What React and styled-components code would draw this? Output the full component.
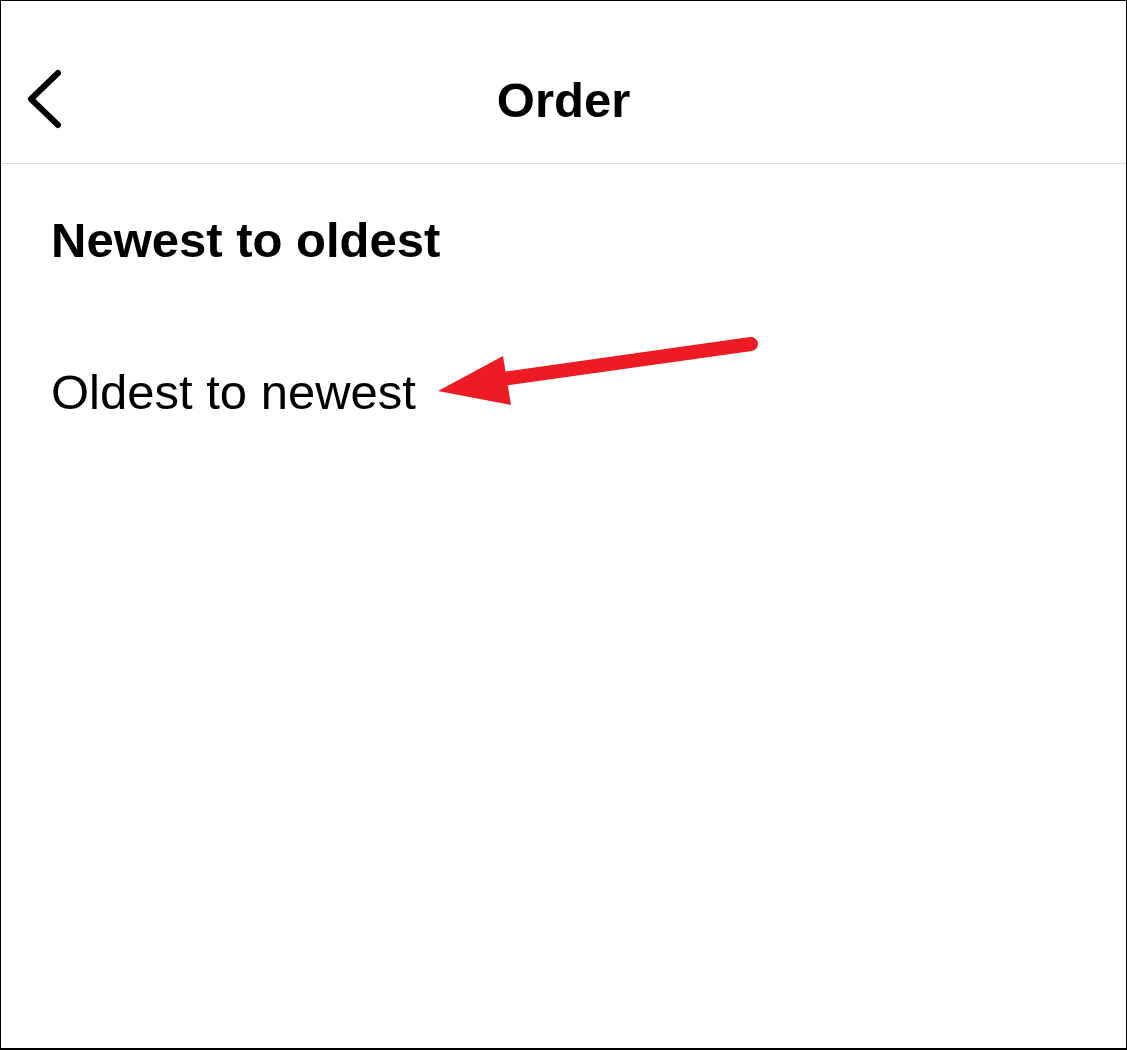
import React from 'react';
import styled, { createGlobalStyle } from 'styled-components';

const GlobalStyle = createGlobalStyle`
  html, body {
    margin: 0;
    padding: 0;
    background: #ffffff;
  }
  body {
    font-family: "Liberation Sans", Arial, sans-serif;
    color: #000000;
  }
`;

const options = [
  { id: 'newest', label: 'Newest to oldest', selected: true },
  { id: 'oldest', label: 'Oldest to newest', selected: false },
];

const BackIcon = () => (
  <svg width="36" height="60" viewBox="0 0 36 60" fill="none">
    <path
      d="M32 4 L5 30 L32 56"
      stroke="#000"
      strokeWidth="6"
      strokeLinecap="round"
      strokeLinejoin="round"
    />
  </svg>
);

const ArrowMark = () => (
  <svg width="340" height="95" viewBox="0 0 340 95">
    <path
      d="M330 24 L82 59"
      stroke="#ed1c24"
      strokeWidth="14"
      strokeLinecap="round"
    />
    <polygon points="82,36 17,71 90,85" fill="#ed1c24" />
  </svg>
);

class App extends React.Component {
  render() {
    return (
      <Screen>
        <GlobalStyle />
        <Header>
          <BackButton aria-label="Back">
            <BackIcon />
          </BackButton>
          <Title>Order</Title>
          <div />
        </Header>
        <OptionList>
          {options.map(o => (
            <OptionRow key={o.id} selected={o.selected}>
              {o.label}
            </OptionRow>
          ))}
        </OptionList>
        <Annotation>
          <ArrowMark />
        </Annotation>
      </Screen>
    );
  }
}

const Screen = styled.div`
  position: relative;
  width: 1127px;
  height: 1050px;
  box-sizing: border-box;
  border-top: 1px solid #000;
  border-left: 1px solid #000;
  border-right: 1px solid #000;
  border-bottom: 2px solid #000;
  background: #fff;
  overflow: hidden;
`;

const Header = styled.header`
  display: grid;
  grid-template-columns: 1fr auto 1fr;
  align-items: center;
  height: 163px;
  box-sizing: border-box;
  padding-top: 33px;
  border-bottom: 1px solid #dbdbdb;
`;

const BackButton = styled.div`
  display: flex;
  align-items: center;
  padding-left: 25px;
`;

const Title = styled.h1`
  margin: 0;
  font-size: 49px;
  line-height: 56px;
  font-weight: 700;
  transform: translateY(1px);
`;

const OptionList = styled.div`
  display: flex;
  flex-direction: column;
`;

const OptionRow = styled.div`
  display: flex;
  align-items: center;
  height: 152px;
  padding-left: 50px;
  font-size: 49px;
  line-height: 56px;
  font-weight: ${p => (p.selected ? 700 : 400)};
`;

const Annotation = styled.div`
  position: absolute;
  left: 420px;
  top: 319px;
  line-height: 0;
`;

export default App;
